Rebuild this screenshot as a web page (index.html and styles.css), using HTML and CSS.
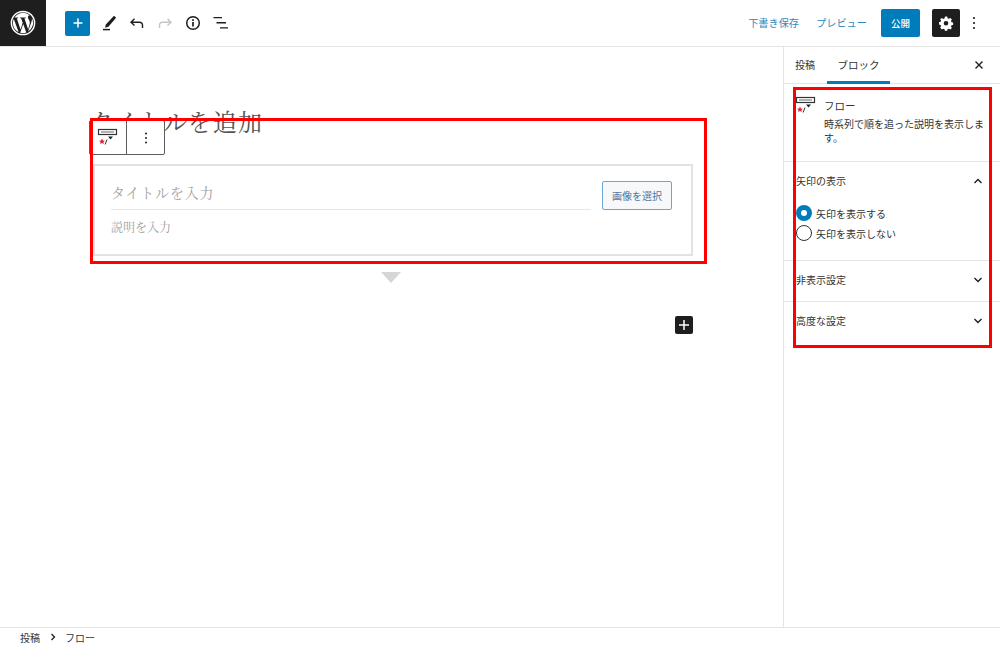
FILE: index.html
```html
<!DOCTYPE html>
<html lang="ja">
<head>
<meta charset="utf-8">
<title>フロー</title>
<link rel="stylesheet" href="styles.css">
</head>
<body>
<div class="app">
  <header class="topbar">
    <div class="wp-logo">
      <svg width="28" height="28" viewBox="0 0 28 28"><circle cx="14" cy="14" r="11.6" fill="none" stroke="#fff" stroke-width="1.5"/><path d="M3.9 14c0 4 2.3 7.4 5.7 9L4.8 9.9A10 10 0 0 0 3.9 14zM20.800 13.500c0-1.300-.5-2.100-.9-2.800-.5-.9-1-1.600-1-2.500 0-1 .8-1.900 1.800-1.900h.1A10.100 10.100 0 0 0 5.600 8.500h.7c1.100 0 2.700-.1 2.700-.1.500 0 .6.800 0 .8 0 0-.5.100-1.200.1l3.700 11.100 2.200-6.700-1.600-4.400c-.5 0-1-.1-1-.1-.5 0-.5-.8.100-.8 0 0 1.700.1 2.700.1 1.100 0 2.700-.1 2.700-.1.500 0 .6.800 0 .8 0 0-.5.100-1.200.1l3.700 11 1-3.400c.4-1.300.7-2.300.7-3.100zM14.200 14.900l-3 8.800a10.100 10.100 0 0 0 6.200-.2l-.1-.1zM22.900 9.100c0 .3.100.7.100 1 0 1-.2 2.100-.8 3.500l-3.100 8.900A10.100 10.100 0 0 0 22.900 9.100z" fill="#fff"/></svg>
    </div>
    <div class="tools">
      <span class="add-btn"><svg width="14" height="14" viewBox="0 0 14 14"><path d="M7 2.500v9M2.500 7h9" stroke="#fff" stroke-width="1.500"/></svg></span>
      <svg class="tool" width="20" height="20" viewBox="0 0 20 20"><path d="M15 2.800l2.100 2-7.700 8.900-3.300 1 .7-3.300zM4 16.600h7" fill="#1e1e1e"/><path d="M4 16.600h7" stroke="#1e1e1e" stroke-width="1.500"/></svg>
      <svg class="tool" width="20" height="20" viewBox="0 0 20 20"><path d="M7.500 5.800 4 9.200l3.500 3.300M4.200 9.200h8c2 0 3.300 1.200 3.300 3.100v2.800" fill="none" stroke="#1e1e1e" stroke-width="1.400"/></svg>
      <svg class="tool" width="20" height="20" viewBox="0 0 20 20"><path d="M12.500 5.800 16 9.200l-3.500 3.300M15.800 9.200h-8c-2 0-3.300 1.200-3.300 3.100v2.800" fill="none" stroke="#c4c4c4" stroke-width="1.400"/></svg>
      <svg class="tool" width="20" height="20" viewBox="0 0 20 20"><circle cx="10" cy="10" r="6.300" fill="none" stroke="#1e1e1e" stroke-width="1.500"/><path d="M10 9v4.500M10 6.300v1.700" stroke="#1e1e1e" stroke-width="1.700"/></svg>
      <svg class="tool" width="20" height="20" viewBox="0 0 20 20"><path d="M2.500 4.600h8.500M5.500 9.800h9.500M9 14.900h8" stroke="#1e1e1e" stroke-width="1.400"/></svg>
    </div>
    <div class="actions">
      <span class="link draft">下書き保存</span>
      <span class="link preview">プレビュー</span>
      <span class="publish">公開</span>
      <span class="gear"><svg width="16" height="16" viewBox="0 0 16 16"><path d="M8 1.500l1.200.1.400 1.700 1.200.5 1.500-.9 1.600 1.700-.9 1.400.5 1.200 1.600.4v2.300l-1.600.4-.5 1.200.9 1.400-1.600 1.700-1.500-.9-1.200.5-.4 1.600H6.900l-.4-1.600-1.200-.5-1.500.9L2.200 12.500l.9-1.400-.5-1.200L1 9.500V7.200l1.600-.4.500-1.200-.9-1.400L3.800 3l1.500.9 1.200-.5.400-1.700zM8 6a2.300 2.300 0 1 0 0 4.600A2.300 2.300 0 0 0 8 6z" fill="#fff" fill-rule="evenodd"/></svg></span>
      <svg class="more" width="4" height="14" viewBox="0 0 4 14"><circle cx="2" cy="2" r="1.100"/><circle cx="2" cy="7" r="1.100"/><circle cx="2" cy="12" r="1.100"/></svg>
    </div>
  </header>

  <div class="main">
    <main class="editor">
      <div class="canvas">
        <h1 class="post-title">タイトルを追加</h1>
        <div class="flow-wrap">
          <div class="block-toolbar">
            <span class="bt-cell bt-icon">
              <svg width="22" height="20" viewBox="0 0 22 20"><rect x="1.500" y="1.500" width="18" height="5" fill="none" stroke="#333" stroke-width="1.200"/><path d="M4 4h13" stroke="#666" stroke-width="1"/><path d="M11 8.500h5l-2.500 3z" fill="#222"/><path d="M5 10.500l.9 2 2.100.2-1.600 1.300.5 2.100L5 15 3.100 16.100l.5-2.100L2 12.700l2.100-.2z" fill="#e8202a"/><path d="M10 11.500l-1.800 5" stroke="#333" stroke-width="1"/></svg>
            </span>
            <span class="bt-cell bt-more">
              <svg width="4" height="12" viewBox="0 0 4 12"><circle cx="2" cy="1.500" r="1"/><circle cx="2" cy="6" r="1"/><circle cx="2" cy="10.500" r="1"/></svg>
            </span>
          </div>
          <section class="flow-card">
            <div class="flow-text">
              <div class="flow-title">タイトルを入力</div>
              <div class="flow-desc">説明を入力</div>
            </div>
            <span class="pick-image">画像を選択</span>
          </section>
          <div class="arrow-down"></div>
          <div class="inserter-row">
            <span class="inserter"><svg width="12" height="12" viewBox="0 0 12 12"><path d="M6 1v10M1 6h10" stroke="#fff" stroke-width="1.500"/></svg></span>
          </div>
        </div>
      </div>
    </main>

    <aside class="sidebar">
      <div class="tabs">
        <span class="tab">投稿</span>
        <span class="tab tab-active">ブロック</span>
        <svg class="close" width="10" height="10" viewBox="0 0 10 10"><path d="M1.500 1.500l7 7M8.500 1.500l-7 7" stroke="#1e1e1e" stroke-width="1.400"/></svg>
      </div>
      <div class="block-info">
        <svg class="info-icon" width="22" height="20" viewBox="0 0 22 20"><rect x="1.500" y="1.500" width="18" height="5" fill="none" stroke="#333" stroke-width="1.200"/><path d="M4 4h13" stroke="#666" stroke-width="1"/><path d="M11 8.500h5l-2.500 3z" fill="#222"/><path d="M5 10.500l.9 2 2.100.2-1.600 1.300.5 2.100L5 15 3.100 16.100l.5-2.100L2 12.700l2.100-.2z" fill="#e8202a"/><path d="M10 11.500l-1.800 5" stroke="#333" stroke-width="1"/></svg>
        <div>
          <div class="info-name">フロー</div>
          <p class="info-desc">時系列で順を追った説明を表示します。</p>
        </div>
      </div>
      <div class="panel panel-open">
        <div class="panel-head">
          <span>矢印の表示</span>
          <svg width="10" height="6" viewBox="0 0 10 6"><path d="M1.500 5L5 1.500 8.500 5" fill="none" stroke="#1e1e1e" stroke-width="1.400"/></svg>
        </div>
        <div class="radios">
          <label class="radio"><span class="dot dot-on"></span>矢印を表示する</label>
          <label class="radio"><span class="dot"></span>矢印を表示しない</label>
        </div>
      </div>
      <div class="panel">
        <div class="panel-head">
          <span>非表示設定</span>
          <svg width="10" height="6" viewBox="0 0 10 6"><path d="M1.500 1L5 4.500 8.500 1" fill="none" stroke="#1e1e1e" stroke-width="1.400"/></svg>
        </div>
      </div>
      <div class="panel panel-last">
        <div class="panel-head">
          <span>高度な設定</span>
          <svg width="10" height="6" viewBox="0 0 10 6"><path d="M1.500 1L5 4.500 8.500 1" fill="none" stroke="#1e1e1e" stroke-width="1.400"/></svg>
        </div>
      </div>
    </aside>
  </div>

  <footer class="breadcrumb">
    <span>投稿</span>
    <svg width="6" height="8" viewBox="0 0 6 8"><path d="M1.500 1l3 3-3 3" fill="none" stroke="#1e1e1e" stroke-width="1.300"/></svg>
    <span>フロー</span>
  </footer>
</div>
<div class="mark mark-block"></div>
<div class="mark mark-side"></div>
</body>
</html>
```
FILE: styles.css
```css
* { box-sizing: border-box; }
html, body { margin: 0; height: 100%; background: #fff; }
body {
  position: relative;
  overflow: hidden;
  font-family: "Noto Sans CJK JP", "Noto Sans", sans-serif;
  color: #1e1e1e;
  font-size: 10px;
}
.app { display: flex; flex-direction: column; height: 671px; }

.topbar {
  flex: 0 0 47px;
  display: flex;
  align-items: center;
  border-bottom: 1px solid #e4e4e4;
}
.wp-logo {
  width: 46px; height: 46px; flex: none; background: #1e1e1e;
  display: flex; align-items: center; justify-content: center;
  margin-bottom: -1px; align-self: flex-start;
}
.tools { display: flex; align-items: center; margin-left: 19px; }
.add-btn {
  width: 25px; height: 25px; background: #007cba; border-radius: 2px;
  display: flex; align-items: center; justify-content: center;
}
.tool { display: block; flex: none; margin-left: 8px; }
.tool:first-of-type { margin-left: 9px; }
.actions { margin-left: auto; display: flex; align-items: center; }
.link { color: #2f8ac0; font-size: 10.200px; line-height: 14px; }
.preview { margin-left: 17px; }
.publish {
  margin-left: 14px; width: 39px; height: 28px; background: #007cba; color: #fff;
  border-radius: 2px; display: flex; align-items: center; justify-content: center;
  font-size: 9.500px; font-weight: 500;
}
.gear {
  margin-left: 12px; width: 28px; height: 28px; background: #1e1e1e; border-radius: 2px;
  display: flex; align-items: center; justify-content: center;
}
.more { margin: 0 24px 0 12px; fill: #1e1e1e; }

.main { flex: 1; display: flex; min-height: 0; }
.editor { flex: 1; min-width: 0; }
.canvas { width: 600px; margin-left: 93px; padding-top: 56px; }
.post-title {
  margin: 0 0 0 -4px; font-family: "Noto Serif CJK JP", "Noto Sans CJK JP", serif;
  font-size: 24px; font-weight: 400; line-height: 36px; color: #555;
  letter-spacing: 0.900px;
}
.flow-wrap { position: relative; margin-top: 25px; }
.block-toolbar {
  position: absolute; left: -4px; top: -44px; z-index: 2;
  display: flex; height: 35px; background: #fff;
  border: 1px solid #5c5c5c; border-radius: 2px;
}
.bt-cell { display: flex; align-items: center; justify-content: center; }
.bt-icon { width: 37px; border-right: 1px solid #5c5c5c; padding-top: 1px; }
.bt-more { width: 37px; fill: #1e1e1e; }
.flow-card {
  height: 92px; padding: 15px 19px 0 16px;
  border: 2px solid #e2e2e2;
  display: flex; align-items: flex-start;
}
.flow-text { width: 481px; }
.flow-title {
  height: 29px; border-bottom: 1px solid #e8e8e8; color: #a0a0a0;
  font-family: "Noto Serif CJK JP", "Noto Sans CJK JP", serif;
  font-size: 14px; line-height: 22px; letter-spacing: 0.800px;
}
.flow-desc {
  margin-top: 7px; color: #a0a0a0; font-size: 12px; line-height: 20px;
  font-family: "Noto Serif CJK JP", "Noto Sans CJK JP", serif;
}
.pick-image {
  margin-left: 11px; width: 70px; height: 29px;
  border: 1.300px solid #6ba6d2; border-radius: 2px; background: #f7f8f9; color: #4a78a6;
  display: flex; align-items: center; justify-content: center; font-size: 10px;
}
.arrow-down {
  width: 0; margin: 16px auto 0 288px;
  border-left: 10px solid transparent; border-right: 10px solid transparent;
  border-top: 11px solid #d6d6d6;
}
.inserter-row { display: flex; justify-content: flex-end; margin-top: 33px; }
.inserter {
  width: 18px; height: 18px; background: #1e1e1e; border-radius: 2px;
  display: flex; align-items: center; justify-content: center;
}

.sidebar { flex: 0 0 217px; border-left: 1px solid #e4e4e4; }
.tabs {
  height: 37px; display: flex; align-items: stretch; padding-left: 11px;
  border-bottom: 1px solid #e4e4e4; position: relative;
}
.tab { display: flex; align-items: center; font-size: 10px; padding-bottom: 1px; color: #333; }
.tab-active {
  margin-left: 12px; width: 63px; height: 37px; font-size: 10.500px;
  border-bottom: 3px solid #007cba; padding-bottom: 0; justify-content: center;
}
.close { align-self: center; margin-left: auto; margin-right: 16px; }
.block-info { display: flex; height: 78px; padding: 12px 13px 0 11px; border-bottom: 1px solid #e4e4e4; }
.info-icon { flex: none; margin-right: 7px; }
.info-name { font-size: 10.500px; line-height: 14px; margin-top: 3px; color: #333; }
.info-desc { margin: 4px 0 0; font-size: 10px; line-height: 14px; color: #333; }

.panel { border-bottom: 1px solid #e4e4e4; }
.panel-last { border-bottom: 0; }
.panel-head {
  height: 40px; display: flex; align-items: center; justify-content: space-between;
  padding: 0 17px 3px 12px; font-size: 10px; color: #333;
}
.panel-open { height: 99px; }
.radios { padding: 1px 0 0 12px; }
.radio { display: flex; align-items: center; height: 20px; font-size: 10px; color: #333; }
.dot {
  width: 16px; height: 16px; border-radius: 50%; border: 1.500px solid #333;
  margin-right: 4px; background: #fff; flex: none;
}
.dot-on { border: 5px solid #007cba; }

.breadcrumb {
  flex: 0 0 22px; border-top: 1px solid #e4e4e4; margin-bottom: 22px;
  display: flex; align-items: center; padding: 0 0 3px 20px; font-size: 10px; color: #333;
}
.breadcrumb svg { margin: 0 9px 0 10px; }

.mark { position: absolute; border: 3px solid #f00; pointer-events: none; z-index: 5; }
.mark-block { left: 90px; top: 118px; width: 617px; height: 146px; }
.mark-side { left: 793px; top: 87px; width: 199px; height: 261px; }
```
